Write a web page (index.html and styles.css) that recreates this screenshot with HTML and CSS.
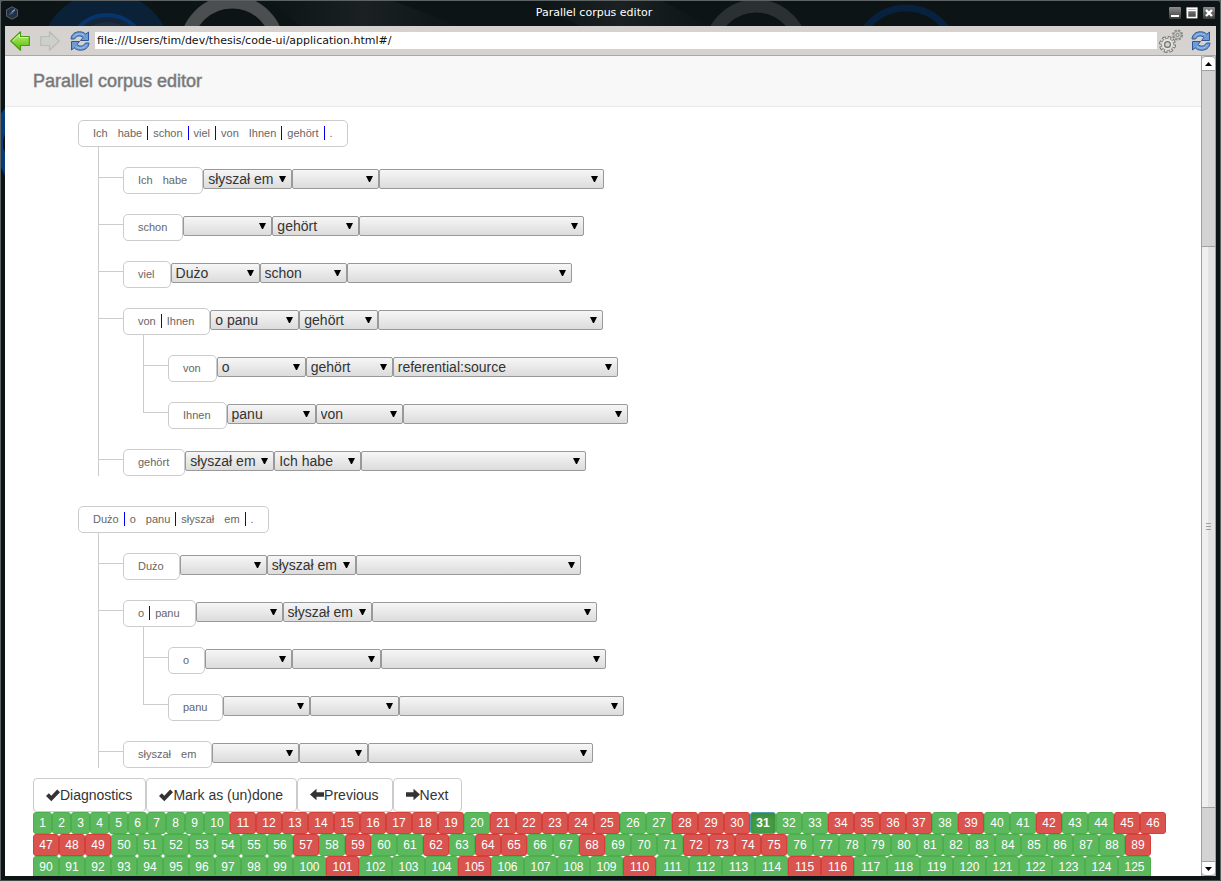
FILE: index.html
```html
<!DOCTYPE html>
<html lang="en">
<head>
<meta charset="utf-8">
<title>Parallel corpus editor</title>
<link rel="stylesheet" href="styles.css">
</head>
<body>
<svg class="wallpaper" viewBox="0 0 1221 881" preserveAspectRatio="none" aria-hidden="true">
  <defs>
    <linearGradient id="sheen" x1="0" x2="1" y1="0" y2="0"><stop offset="0" stop-color="#0c1415"/><stop offset=".5" stop-color="#1b2122"/><stop offset="1" stop-color="#0c1415"/></linearGradient>
  </defs>
  <rect width="1221" height="881" fill="#0c1415"/>
  <path d="M270 0h120l70 26H300z" fill="url(#sheen)"/>
  <path d="M530 0h130l50 26H580z" fill="url(#sheen)"/>
  <circle cx="106" cy="58" r="66" fill="#0a2138"/>
  <circle cx="107" cy="54" r="39" fill="#16263a" stroke="#06356e" stroke-width="4"/>
  <circle cx="107" cy="54" r="32" fill="#1f2d40"/>
  <circle cx="232" cy="48" r="46" fill="none" stroke="#4b4f50" stroke-width="13"/>
  <circle cx="756" cy="52" r="46" fill="none" stroke="#2b3032" stroke-width="13"/>
  <circle cx="906" cy="58" r="50" fill="none" stroke="#08213f" stroke-width="7"/>
  <path d="M0 115L5 108V176L0 165z" fill="#063b78"/>
  <path d="M3 140L5 134V152L3 148z" fill="#0c1415"/>
  <path d="M0 881V3Q0 0 3 0H1218Q1221 0 1221 3V881" fill="none" stroke="#5d6263" stroke-width="2"/>
  <path d="M0 880.500H1221" stroke="#43484a"/>
</svg>
<div class="window">
  <header class="titlebar">
    <svg class="app-icon" viewBox="0 0 14 14" aria-hidden="true"><path d="M7 .8l5.500 3v6.400L7 13.200 1.500 10.200V3.800z" fill="#26303f" stroke="#59616d"/><path d="M3.500 9.500l3-4 4-2-2.500 3.800z" fill="#3c6ea8"/><path d="M7 5.500l3-1.800" stroke="#8fb5dd"/></svg>
    <span class="window-title">Parallel corpus editor</span>
    <div class="window-buttons">
      <button aria-label="Minimize"><svg viewBox="0 0 12 12"><path d="M2 8h8v2H2z" fill="#fff"/></svg></button>
      <button aria-label="Maximize"><svg viewBox="0 0 12 12"><path d="M1.500 1.500h9v9h-9zM1 3.500h10" fill="none" stroke="#fff" stroke-width="1.500"/></svg></button>
      <button aria-label="Close"><svg viewBox="0 0 12 12"><path d="M3 3l6 6M9 3L3 9" stroke="#fff" stroke-width="2.400"/></svg></button>
    </div>
  </header>
  <nav class="toolbar">
    <button class="tool" aria-label="Back"><svg viewBox="0 0 20 20"><defs><linearGradient id="go" x1="0" y1="0" x2="0" y2="1"><stop offset="0" stop-color="#c9f29a"/><stop offset=".5" stop-color="#8bd83e"/><stop offset="1" stop-color="#55b80a"/></linearGradient></defs><path d="M.8 10L10.500.8V5.500H19.300V14.500H10.500V19.200z" fill="url(#go)" stroke="#4a9a0d" stroke-width="1.200" stroke-linejoin="round"/><path d="M2.500 10L9.500 3.200V6.500H18.300" fill="none" stroke="#d7f7b4"/></svg></button>
    <button class="tool forward" aria-label="Forward"><svg viewBox="0 0 20 20"><path d="M19.200 10L9.500.8V5.500H.7V14.500H9.500V19.200z" fill="#cdcfca" stroke="#b9bbb6" stroke-width="1.200" stroke-linejoin="round"/></svg></button>
    <button class="tool" aria-label="Reload"><svg viewBox="0 0 20 20"><g id="reload" fill="#6f9bd4" stroke="#2c5899" stroke-linejoin="round"><path d="M1 8C1.500 3 5 .8 9.500.8c3 0 5 1 6.300 2.400L18.500 1V9.500H10.500L13 6.500C10.500 4 6.500 4.500 4.500 8z"/><path d="M19 12c-.5 5-4 7.200-8.500 7.200-3 0-5-1-6.300-2.400L1.500 19v-8.500h8L7 13.500c2.500 2.500 6.500 2 8.500-1.500z"/><path d="M3.500 6C6 2.500 11 1.800 14 4.500M16.500 14C14 17.500 9 18.200 6 15.500" fill="none" stroke="#a9c6ec"/></g></svg></button>
    <input class="address" type="text" aria-label="Address" value="file:///Users/tim/dev/thesis/code-ui/application.html#/">
    <button class="tool gears" aria-label="Settings"><svg viewBox="0 0 24 24"><g fill="none"><circle cx="8.500" cy="15.500" r="6.800" stroke="#70726e" stroke-width="3.400" stroke-dasharray="3.400 1.940"/><circle cx="8.500" cy="15.500" r="6.100" fill="#e2e4df" stroke="#8a8c88"/><circle cx="8.500" cy="15.500" r="6.600" stroke="#e2e4df" stroke-width="2" stroke-dasharray="1.800 3.380" stroke-dashoffset="-.8"/><circle cx="8.500" cy="15.500" r="2.900" fill="#d6d2cf" stroke="#70726e" stroke-width="1.200"/><circle cx="18.500" cy="6" r="4.400" stroke="#8a8c88" stroke-width="2.400" stroke-dasharray="2.200 1.256"/><circle cx="18.500" cy="6" r="3.700" fill="#cdcfca" stroke="#9a9c98"/><circle cx="18.500" cy="6" r="1.600" fill="#d6d2cf" stroke="#80827e"/></g></svg></button>
    <button class="tool" aria-label="Refresh"><svg viewBox="0 0 20 20"><use href="#reload"/></svg></button>
  </nav>
  <div class="viewport">
    <div class="page">
      <div class="navbar"><a class="brand" href="#/">Parallel corpus editor</a></div>
      <main>
        <div id="trees"></div>
        <div class="actions">
          <button class="btn"><svg viewBox="0 0 14 14"><path d="M0 8L2.800 5.200 5.300 7.700 11.200 1.500 14 4.300 5.300 13.200z"/></svg>Diagnostics</button>
          <button class="btn"><svg viewBox="0 0 14 14"><path d="M0 8L2.800 5.200 5.300 7.700 11.200 1.500 14 4.300 5.300 13.200z"/></svg>Mark as (un)done</button>
          <button class="btn"><svg viewBox="0 0 14 14"><path d="M0 6.500L6.500.8V4.300H14V8.700H6.500V12.200z"/></svg>Previous</button>
          <button class="btn"><svg viewBox="0 0 14 14"><path d="M14 6.500L7.500.8V4.300H0V8.700H7.500V12.200z"/></svg>Next</button>
        </div>
        <div id="sentences" class="sentences"></div>
      </main>
    </div>
    <div class="scrollbar" aria-hidden="true">
      <div class="step up"><svg viewBox="0 0 7 4"><path d="M0 4L3.500 0 7 4z"/></svg></div>
      <div class="track before"></div>
      <div class="thumb"><i></i><i></i><i></i></div>
      <div class="track after"></div>
      <div class="step down"><svg viewBox="0 0 7 4"><path d="M0 0L3.500 4 7 0z"/></svg></div>
    </div>
  </div>
</div>
<script src="app.js"></script>
</body>
</html>
```

FILE: styles.css
```css
* { box-sizing: border-box; }
body {
  margin: 0;
  height: 100vh;
  overflow: hidden;
  background: #0c1415;
  color: #333;
  font-family: "Liberation Sans", Arial, sans-serif;
  font-size: 14px;
}
button, select, input { font-family: inherit; margin: 0; }
.wallpaper { position: absolute; inset: 0; width: 100%; height: 100%; z-index: -1; }
.window { display: flex; flex-direction: column; height: 100%; padding: 0 5px 5px; }

.titlebar { flex: none; display: flex; align-items: center; height: 26px; }
.app-icon { width: 14px; height: 14px; }
.window-title {
  flex: 1;
  text-align: center;
  color: #fff;
  font: 11px/14px "DejaVu Sans", sans-serif;
}
.window-buttons { display: flex; gap: 5px; padding-right: 1px; }
.window-buttons button {
  width: 12px; height: 12px; padding: 0; border: 0; border-radius: 1px;
  background: linear-gradient(#8d8d8d, #3a3a3a);
}
.window-buttons svg { display: block; width: 12px; height: 12px; }

.toolbar {
  flex: none; display: flex; align-items: center; gap: 5px;
  height: 30px; padding: 0 5px;
  background: #d6d2cf; border-bottom: 1px solid #aaa7a5;
}
.tool { flex: none; width: 20px; height: 20px; padding: 0; border: 0; background: none; }
.tool svg { display: block; width: 100%; height: 100%; }
.tool.forward { margin: 0 5px; }
.tool.gears { width: 24px; height: 24px; margin: 0 3px 0 -3px; }
.address {
  flex: 1; min-width: 0; height: 17px; padding: 0 2px; border: 0;
  background: #fff; color: #111;
  font: 11px/17px "DejaVu Sans", sans-serif;
}

.viewport { flex: 1; min-height: 0; display: flex; background: #fff; }
.page { flex: 1; min-width: 0; overflow: hidden; }
.navbar { height: 51px; padding: 15px 28px; background: #f8f8f8; border-bottom: 1px solid #e7e7e7; }
.brand {
  display: block; color: #777; font-size: 18px; line-height: 20px; text-decoration: none;
  -webkit-text-stroke: 1px rgba(119, 119, 119, .5);
}
main { padding: 13px 28px 0; }

.tree, .tree ul { margin: 0; padding: 0; list-style: none; }
.tree { margin: 0 0 30px 45px; }
#trees .tree:last-child { margin-bottom: 10px; }
.tree ul { margin-left: 20px; }
.tree li li {
  padding-top: 20px;
  background: linear-gradient(#ccc, #ccc) 0 0 / 1px 100% no-repeat;
}
.tree li li li:last-child { background-size: 1px 31px; }
.tree li li ul { margin-left: 45px; }
.node { display: flex; align-items: flex-start; }
.tree li li > .node::before { content: ""; width: 25px; height: 1px; margin-top: 10px; background: #ccc; }
.words {
  display: flex; align-items: center; height: 27px; padding: 0 9px 2px;
  border: 1px solid #ccc; border-radius: 5px; background: #fff;
  color: #666; font-size: 11px; line-height: 14px; white-space: nowrap;
}
.tree li li .words { padding-right: 10px; }
.words span { padding: 0 5px; }
.words .split { border-right: 1px solid #00e; }
.node select {
  appearance: none;
  width: 87px; height: 20px; margin-top: 2px; padding: 0 4px;
  border: 1px solid #999; border-radius: 2px;
  background: url("data:image/svg+xml,%3Csvg xmlns='http://www.w3.org/2000/svg' width='7' height='6'%3E%3Cpath d='M0 0h7L4 6H3z'/%3E%3C/svg%3E") right 5px top 6px no-repeat, linear-gradient(#f6f6f6, #dcdcdc);
  color: #333; font-size: 14px; line-height: 18px;
}
.node .w-short { width: 69px; }
.node .w-mid { width: 79px; }
.node .w-long { width: 89px; }
.node .w-relation { width: 225px; }

.actions { display: flex; }
.btn {
  display: flex; align-items: center; height: 34px; padding: 0 13px 0 12px;
  border: 1px solid #ccc; border-radius: 4px; background: #fff;
  color: #333; font-size: 14px; line-height: 20px; white-space: nowrap;
}
.btn svg { width: 14px; height: 14px; fill: #333; }
.sentences { display: flex; flex-wrap: wrap; }
.mark {
  min-width: 26px; height: 22px; padding: 0; border: 1px solid #4cae4c; border-radius: 3px;
  background: #5cb85c; color: #fff; font-size: 12px; line-height: 18px; text-align: center;
}
.mark.one { min-width: 19px; }
.mark.three { min-width: 33px; }
.mark.open { background: #d9534f; border-color: #d43f3a; }
.mark.current {
  background: #449d44; border-color: #4b9fb0; font-weight: bold;
  box-shadow: inset 0 3px 5px rgba(0, 0, 0, .125);
}

.scrollbar {
  flex: none; display: flex; flex-direction: column; width: 15px;
  border: solid #a0a0a0; border-width: 0 1px; background: #d3d3d3;
}
.step { flex: none; display: flex; align-items: center; justify-content: center; height: 15px; background: #fff; }
.step svg { width: 7px; height: 4px; }
.up { border: solid #a0a0a0; border-width: 1px 0; border-radius: 4px 4px 0 0; }
.down { border: solid #a0a0a0; border-width: 1px 0; border-radius: 0 0 4px 4px; }
.before { flex: 175; }
.thumb {
  flex: 562; display: flex; flex-direction: column; align-items: center; justify-content: center; gap: 2px;
  border: solid #a0a0a0; border-width: 1px 0;
  background: linear-gradient(90deg, #efefef 50%, #e3e3e3 50%);
}
.thumb i { width: 5px; height: 1px; background: #a0a0a0; }
.after { flex: 53; }
```

FILE: app.js
```js
// A phrase is a list of words; "|" marks a split point after the preceding word.
// fields: [text, width class] for alignment, head and relation.
const rel = (text = "") => [text, "w-relation"];
const long = (text = "") => [text, "w-long"];
const base = (text = "") => [text, ""];

const trees = [
  { phrase: "Ich habe| schon| viel| von Ihnen| gehört| .", children: [
    { phrase: "Ich habe", fields: [long("słyszał em"), base(), rel()] },
    { phrase: "schon", fields: [long(), base("gehört"), rel()] },
    { phrase: "viel", fields: [long("Dużo"), base("schon"), rel()] },
    { phrase: "von| Ihnen", fields: [long("o panu"), ["gehört", "w-mid"], rel()], children: [
      { phrase: "von", fields: [long("o"), base("gehört"), rel("referential:source")] },
      { phrase: "Ihnen", fields: [long("panu"), base("von"), rel()] }
    ] },
    { phrase: "gehört", fields: [long("słyszał em"), base("Ich habe"), rel()] }
  ] },
  { phrase: "Dużo| o panu| słyszał em| .", children: [
    { phrase: "Dużo", fields: [base(), long("słyszał em"), rel()] },
    { phrase: "o| panu", fields: [base(), long("słyszał em"), rel()], children: [
      { phrase: "o", fields: [base(), long(), rel()] },
      { phrase: "panu", fields: [base(), long(), rel()] }
    ] },
    { phrase: "słyszał em", fields: [base(), ["", "w-short"], rel()] }
  ] }
];

const fieldNames = ["Alignment", "Head", "Relation"];

function renderNode(node) {
  const words = node.phrase.split(" ").map(w =>
    w.endsWith("|") ? `<span class="split">${w.slice(0, -1)}</span>` : `<span>${w}</span>`).join("");
  const fields = (node.fields || []).map(([text, cls], i) =>
    `<select class="${cls}" aria-label="${fieldNames[i]}"><option>${text}</option></select>`).join("");
  const children = node.children ? `<ul>${node.children.map(renderNode).join("")}</ul>` : "";
  return `<li><div class="node"><div class="words">${words}</div>${fields}</div>${children}</li>`;
}

document.getElementById("trees").innerHTML =
  trees.map(t => `<ul class="tree">${renderNode(t)}</ul>`).join("");

const open = new Set([11, 12, 13, 14, 15, 16, 17, 18, 19, 21, 22, 23, 24, 25, 28, 29, 30,
  34, 35, 36, 37, 39, 42, 45, 46, 47, 48, 49, 57, 59, 62, 64, 65, 68, 72, 73, 74, 75, 89,
  101, 105, 110, 115, 116]);
const current = 31;
let marks = "";
for (let n = 1; n <= 125; n++) {
  const size = n < 10 ? " one" : n > 99 ? " three" : "";
  marks += `<button class="mark${size}${open.has(n) ? " open" : ""}${n === current ? " current" : ""}">${n}</button>`;
}
document.getElementById("sentences").innerHTML = marks;
```
